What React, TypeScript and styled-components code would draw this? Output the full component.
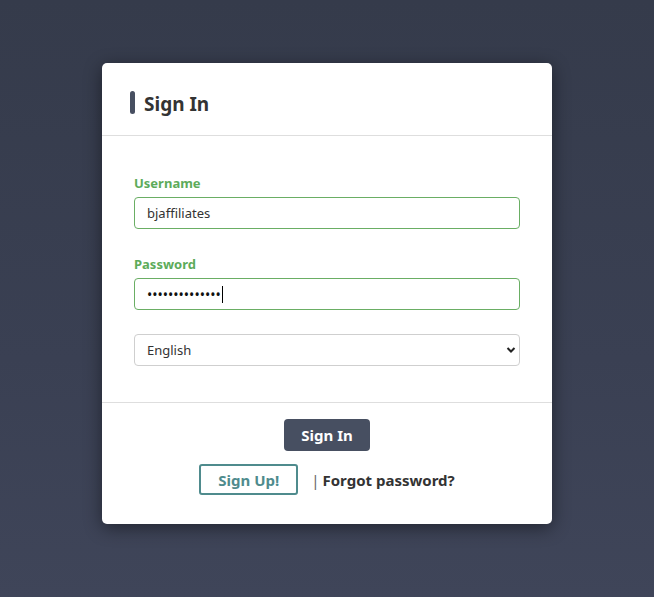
import styled, { createGlobalStyle } from 'styled-components'

const GlobalStyle = createGlobalStyle`
  html, body {
    margin: 0;
    padding: 0;
  }
  body {
    font-family: 'Noto Sans', 'Open Sans', sans-serif;
    color: #333;
  }
`

const Page = styled.div`
  width: 654px;
  height: 597px;
  box-sizing: border-box;
  padding-top: 63px;
  display: flex;
  justify-content: center;
  align-items: flex-start;
  background: linear-gradient(180deg, #353b4b 0%, #3a4053 60%, #3f4559 100%);
`

const Card = styled.div`
  width: 450px;
  background: #fff;
  border-radius: 5px;
  box-shadow: 0 4px 18px rgba(0, 0, 0, 0.45);
  display: flex;
  flex-direction: column;
`

const Header = styled.div`
  display: flex;
  align-items: center;
  gap: 9px;
  padding: 28px 28px 21px;
  border-bottom: 1px solid #dedede;
`

const TitleBar = styled.span`
  width: 5px;
  height: 23px;
  border-radius: 3px;
  background: #474f61;
`

const Title = styled.h1`
  margin: 0;
  padding-top: 3px;
  font-size: 19px;
  line-height: 20px;
  font-weight: 700;
  color: #333;
`

const Body = styled.form`
  display: flex;
  flex-direction: column;
  padding: 38px 32px 36px;
  border-bottom: 1px solid #dedede;
`

const Field = styled.div<{ $gap?: number }>`
  display: flex;
  flex-direction: column;
  gap: 5px;
  margin-bottom: ${(p) => p.$gap ?? 26}px;
`

const Label = styled.label`
  font-size: 13px;
  line-height: 18px;
  font-weight: 700;
  color: #5dab5a;
`

const InputWrap = styled.div`
  position: relative;
`

const Input = styled.input`
  box-sizing: border-box;
  height: 32px;
  width: 100%;
  padding: 0 12px;
  border: 1px solid #6aae64;
  border-radius: 4px;
  font-family: inherit;
  font-size: 13px;
  color: #333;
  background: #fff;
  outline: none;
  caret-color: #000;

  &[type='password'] {
    font-size: 14px;
    color: #111;
  }
`

const Caret = styled.span<{ $left: number }>`
  position: absolute;
  top: 8px;
  left: ${(p) => p.$left}px;
  width: 1px;
  height: 17px;
  background: #000;
`

const SelectWrap = styled.div`
  position: relative;
`

const Select = styled.select`
  box-sizing: border-box;
  height: 32px;
  width: 100%;
  padding: 0 12px;
  border: 1px solid #cfcfcf;
  border-radius: 4px;
  font-family: inherit;
  font-size: 13px;
  color: #333;
  background: #fff;
  appearance: none;
  outline: none;
`

const Chevron = styled.svg`
  position: absolute;
  right: 4px;
  top: 12px;
  width: 10px;
  height: 8px;
  pointer-events: none;
`

const Footer = styled.div`
  display: flex;
  flex-direction: column;
  align-items: center;
  gap: 13px;
  padding: 16px 0 29px;
`

const PrimaryButton = styled.button`
  height: 32px;
  padding: 0 17px;
  border: none;
  border-radius: 4px;
  background: #474f61;
  color: #fff;
  font-family: inherit;
  font-size: 15px;
  font-weight: 700;
  cursor: pointer;
`

const LinkRow = styled.div`
  display: flex;
  align-items: center;
  gap: 13px;
  font-size: 15px;
  font-weight: 700;
  color: #333;
`

const OutlineButton = styled.button`
  height: 31px;
  padding: 0 17px;
  border: 2px solid #4f8b8d;
  border-radius: 3px;
  background: #fff;
  color: #4f8b8d;
  font-family: inherit;
  font-size: 15px;
  font-weight: 700;
  cursor: pointer;
`

const Pipe = styled.span`
  font-weight: 400;
  color: #666;
  margin-right: 3px;
`

const ForgotLink = styled.a`
  color: #333;
  text-decoration: none;
`

export default function App() {
  return (
    <>
      <GlobalStyle />
      <Page>
        <Card>
          <Header>
            <TitleBar />
            <Title>Sign In</Title>
          </Header>
          <Body onSubmit={(e) => e.preventDefault()}>
            <Field>
              <Label htmlFor='username'>Username</Label>
              <Input id='username' type='text' defaultValue='bjaffiliates' />
            </Field>
            <Field $gap={24}>
              <Label htmlFor='password'>Password</Label>
              <InputWrap>
                <Input
                  id='password'
                  type='password'
                  defaultValue='bjaffiliates12'
                />
                <Caret $left={88} />
              </InputWrap>
            </Field>
            <SelectWrap>
              <Select defaultValue='en'>
                <option value='en'>English</option>
                <option value='es'>Español</option>
              </Select>
              <Chevron viewBox='0 0 10 8'>
                <path
                  d='M1.5 2 L5 5.5 L8.5 2'
                  fill='none'
                  stroke='#222'
                  strokeWidth='2'
                />
              </Chevron>
            </SelectWrap>
          </Body>
          <Footer>
            <PrimaryButton type='button'>Sign In</PrimaryButton>
            <LinkRow>
              <OutlineButton type='button'>Sign Up!</OutlineButton>
              <span>
                <Pipe>|</Pipe>
                <ForgotLink href='#'>Forgot password?</ForgotLink>
              </span>
            </LinkRow>
          </Footer>
        </Card>
      </Page>
    </>
  )
}
